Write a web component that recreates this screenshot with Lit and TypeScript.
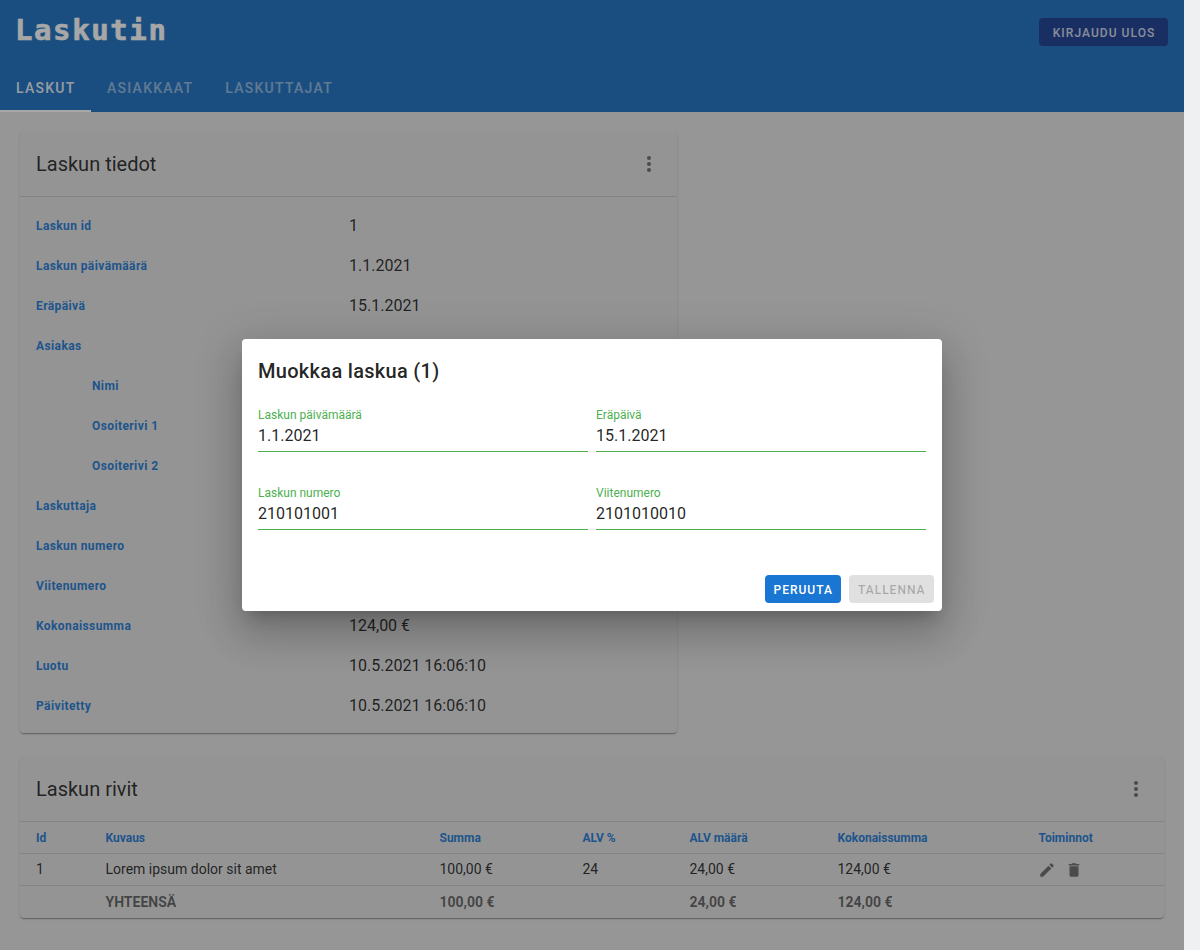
import { LitElement, css, html } from 'lit'
import { customElement } from 'lit/decorators.js'

const MORE = 'M12 8c1.1 0 2-.9 2-2s-.9-2-2-2-2 .9-2 2 .9 2 2 2zm0 2c-1.1 0-2 .9-2 2s.9 2 2 2 2-.9 2-2-.9-2-2-2zm0 6c-1.1 0-2 .9-2 2s.9 2 2 2 2-.9 2-2-.9-2-2-2z'
const EDIT = 'M3 17.25V21h3.75L17.81 9.94l-3.75-3.75L3 17.25zM20.71 7.04c.39-.39.39-1.02 0-1.41l-2.34-2.34a.9959.9959 0 0 0-1.41 0l-1.83 1.83 3.75 3.75 1.83-1.83z'
const DELETE = 'M6 19c0 1.1.9 2 2 2h8c1.1 0 2-.9 2-2V7H6v12zM19 4h-3.5l-1-1h-5l-1 1H5v2h14V4z'

const icon = (d: string, cls = '') => html`<svg class="icon ${cls}" viewBox="0 0 24 24"><path d=${d}></path></svg>`

const details: { label: string; value?: string; sub?: boolean }[] = [
  { label: 'Laskun id', value: '1' },
  { label: 'Laskun päivämäärä', value: '1.1.2021' },
  { label: 'Eräpäivä', value: '15.1.2021' },
  { label: 'Asiakas' },
  { label: 'Nimi', sub: true },
  { label: 'Osoiterivi 1', sub: true },
  { label: 'Osoiterivi 2', sub: true },
  { label: 'Laskuttaja' },
  { label: 'Laskun numero' },
  { label: 'Viitenumero' },
  { label: 'Kokonaissumma', value: '124,00 €' },
  { label: 'Luotu', value: '10.5.2021 16:06:10' },
  { label: 'Päivitetty', value: '10.5.2021 16:06:10' },
]

const fields = [
  { label: 'Laskun päivämäärä', value: '1.1.2021' },
  { label: 'Eräpäivä', value: '15.1.2021' },
  { label: 'Laskun numero', value: '210101001' },
  { label: 'Viitenumero', value: '2101010010' },
]

@customElement('app-root')
export class AppRoot extends LitElement {
  protected render() {
    return html`
      <div class="page">
        <header class="appbar">
          <div class="toolbar">
            <span class="logo">Laskutin</span>
            <button class="logout">Kirjaudu ulos</button>
          </div>
          <nav class="tabs">
            <a class="tab active">Laskut</a>
            <a class="tab">Asiakkaat</a>
            <a class="tab">Laskuttajat</a>
          </nav>
        </header>

        <main class="content">
          <section class="card details">
            <div class="card-head">
              <h2>Laskun tiedot</h2>
              ${icon(MORE, 'more')}
            </div>
            <div class="detail-list">
              ${details.map(
                (d) => html`
                  <div class="detail-row">
                    <span class="detail-label ${d.sub ? 'sub' : ''}">${d.label}</span>
                    <span class="detail-value">${d.value ?? ''}</span>
                  </div>
                `,
              )}
            </div>
          </section>

          <section class="card">
            <div class="card-head">
              <h2>Laskun rivit</h2>
              ${icon(MORE, 'more')}
            </div>
            <div class="row head">
              <span>Id</span><span>Kuvaus</span><span>Summa</span><span>ALV %</span><span>ALV määrä</span
              ><span>Kokonaissumma</span><span>Toiminnot</span>
            </div>
            <div class="row body">
              <span>1</span><span>Lorem ipsum dolor sit amet</span><span>100,00 €</span><span>24</span
              ><span>24,00 €</span><span>124,00 €</span>
              <span class="actions">${icon(EDIT)}${icon(DELETE)}</span>
            </div>
            <div class="row total">
              <span></span><span>YHTEENSÄ</span><span>100,00 €</span><span></span><span>24,00 €</span
              ><span>124,00 €</span><span></span>
            </div>
          </section>
        </main>

        <div class="backdrop">
          <div class="dialog">
            <h3>Muokkaa laskua (1)</h3>
            <div class="form">
              ${fields.map(
                (f) => html`
                  <label class="field">
                    <span class="field-label">${f.label}</span>
                    <span class="field-value">${f.value}</span>
                  </label>
                `,
              )}
            </div>
            <div class="dialog-actions">
              <button class="btn primary">Peruuta</button>
              <button class="btn disabled">Tallenna</button>
            </div>
          </div>
        </div>
      </div>
      <div class="gutter"></div>
    `
  }

  static styles = css`
    :host {
      display: flex;
      height: 950px;
      overflow: hidden;
      font-family: Roboto, sans-serif;
      color: rgba(0, 0, 0, 0.87);
    }

    .page {
      position: relative;
      width: 1184px;
      height: 950px;
      flex: none;
      background: #e3e3e3;
    }

    .gutter {
      flex: 1;
      background: #eff0f1;
    }

    .appbar {
      height: 112px;
      background: #166cbe;
      color: #fff;
    }

    .toolbar {
      height: 64px;
      display: flex;
      justify-content: space-between;
      padding: 0 16px;
    }

    .logo {
      margin-left: -1px;
      font-family: 'DejaVu Sans Mono', monospace;
      font-size: 29px;
      font-weight: 700;
      letter-spacing: 1.6px;
      line-height: 60px;
      -webkit-text-stroke: 0.6px #fff;
      color: #fff;
    }

    .logout {
      margin-top: 18px;
      height: 28px;
      width: 129px;
      padding: 1px 0 0 1px;
      border: 0;
      border-radius: 4px;
      background: #13388f;
      color: rgba(255, 255, 255, 0.8);
      font: 500 12px Roboto, sans-serif;
      letter-spacing: 1.05px;
      text-transform: uppercase;
    }

    .tabs {
      height: 48px;
      display: flex;
    }

    .tab {
      padding: 0 16px;
      box-sizing: border-box;
      font-size: 14px;
      font-weight: 500;
      letter-spacing: 1.25px;
      line-height: 48px;
      text-transform: uppercase;
      color: rgba(255, 255, 255, 0.5);
    }

    .tab.active {
      width: 91px;
      color: rgba(255, 255, 255, 0.9);
      border-bottom: 2px solid #fff;
    }

    .content {
      display: flex;
      flex-direction: column;
      gap: 24px;
      padding: 20px 20px 0;
    }

    .card {
      background: #e0e0e0;
      border-radius: 4px;
      box-shadow: 0 2px 1px -1px rgba(0, 0, 0, 0.2), 0 1px 1px 0 rgba(0, 0, 0, 0.14), 0 1px 3px 0 rgba(0, 0, 0, 0.12);
    }

    .card.details {
      width: 657px;
    }

    .card-head {
      height: 64px;
      display: flex;
      align-items: center;
      justify-content: space-between;
      padding: 0 16px;
      border-bottom: 1px solid rgba(0, 0, 0, 0.12);
    }

    h2 {
      margin: 0;
      font-size: 20px;
      font-weight: 400;
    }

    .icon {
      width: 18px;
      height: 18px;
      display: block;
      fill: rgba(0, 0, 0, 0.54);
    }

    .icon.more {
      width: 24px;
      height: 24px;
    }

    .detail-list {
      padding: 8px 0;
    }

    .detail-row {
      height: 40px;
      display: grid;
      grid-template-columns: 313px 1fr;
      align-items: center;
      padding-left: 16px;
    }

    .detail-label {
      padding-top: 2px;
      font-size: 12px;
      font-weight: 700;
      letter-spacing: 0.4px;
      color: #1976d2;
    }

    .detail-label.sub {
      padding-left: 56px;
    }

    .detail-value {
      font-size: 16px;
    }

    .row {
      height: 32px;
      box-sizing: border-box;
      display: grid;
      grid-template-columns: 69.5px 334px 143px 107px 148px 201px 1fr;
      align-items: center;
      padding-left: 16px;
      font-size: 14px;
      border-bottom: 1px solid rgba(0, 0, 0, 0.12);
    }

    .row.head {
      font-size: 12px;
      font-weight: 700;
      color: #1976d2;
    }

    .row.body > span:not(.actions) {
      padding-bottom: 2px;
    }

    .row.total {
      font-weight: 700;
      color: rgba(0, 0, 0, 0.6);
      border-bottom: 0;
    }

    .actions {
      display: flex;
      gap: 9px;
      margin-left: -1px;
    }

    .backdrop {
      position: absolute;
      inset: 0;
      display: flex;
      align-items: center;
      justify-content: center;
      background: rgba(34, 34, 34, 0.4);
    }

    .dialog {
      width: 700px;
      height: 272px;
      box-sizing: border-box;
      position: relative;
      padding: 16px;
      background: #fff;
      border-radius: 4px;
      box-shadow: 0 11px 15px -7px rgba(0, 0, 0, 0.2), 0 24px 38px 3px rgba(0, 0, 0, 0.14),
        0 9px 46px 8px rgba(0, 0, 0, 0.12);
    }

    h3 {
      margin: 0;
      font-size: 20px;
      font-weight: 500;
      letter-spacing: 0.3px;
      line-height: 32px;
    }

    .form {
      display: grid;
      grid-template-columns: 330px 330px;
      column-gap: 8px;
      row-gap: 34px;
      margin-top: 21px;
    }

    .field {
      display: flex;
      flex-direction: column;
      border-bottom: 1px solid #4caf50;
    }

    .field-label {
      font-size: 12px;
      line-height: 14px;
      color: #4caf50;
    }

    .field-value {
      font-size: 16px;
      line-height: 27px;
      height: 29px;
    }

    .dialog-actions {
      position: absolute;
      right: 8px;
      bottom: 8px;
      display: flex;
      gap: 8px;
    }

    .btn {
      height: 28px;
      padding: 1px 8.5px 0;
      border: 0;
      border-radius: 4px;
      font: 500 12px Roboto, sans-serif;
      letter-spacing: 1px;
      text-transform: uppercase;
    }

    .btn.primary {
      background: #1976d2;
      color: #fff;
    }

    .btn.disabled {
      background: #e0e0e0;
      color: rgba(0, 0, 0, 0.26);
    }
  `
}
